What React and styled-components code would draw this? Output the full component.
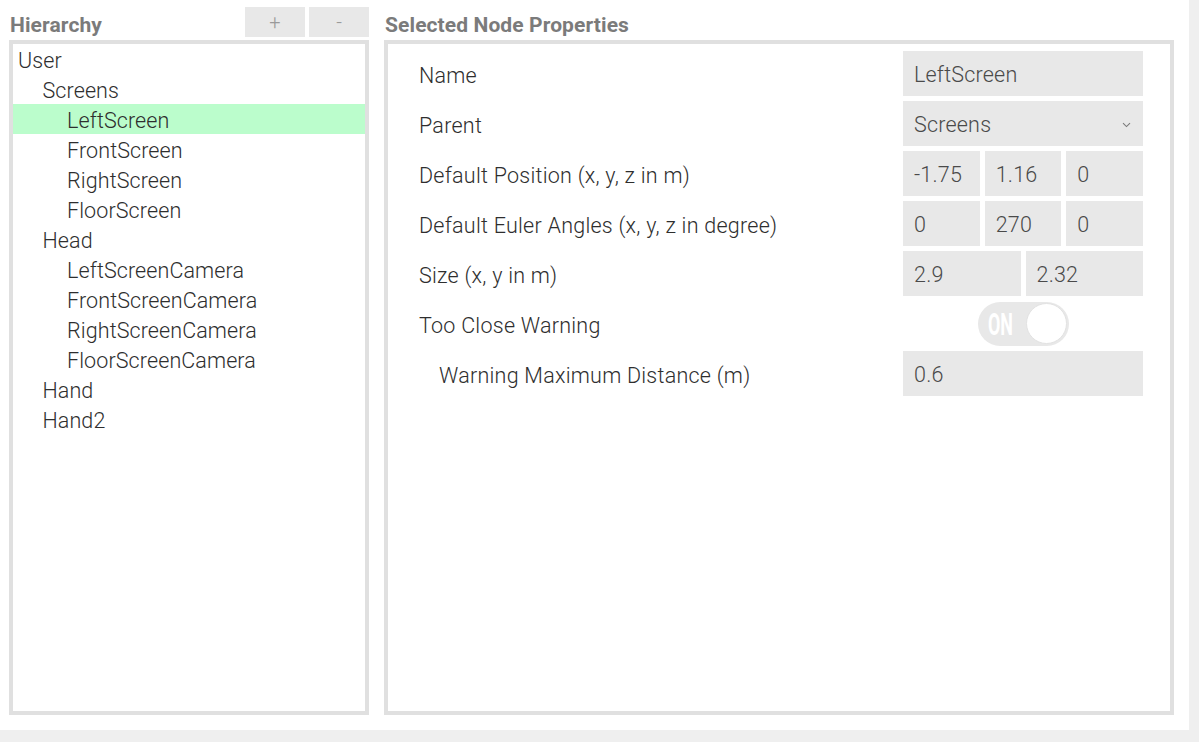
import React from "react";
import styled, { createGlobalStyle } from "styled-components";

const Global = createGlobalStyle`
  html, body { margin: 0; padding: 0; background: #efefef; }
  body { font-family: Roboto, "Liberation Sans", sans-serif; }
  * { box-sizing: border-box; }
`;

const Window = styled.div`
  width: 1189px;
  height: 730px;
  background: #ffffff;
  display: flex;
  gap: 15px;
  padding: 0 15px 15px 9px;
`;

const Column = styled.div`
  display: flex;
  flex-direction: column;
  width: ${(p) => p.$w}px;
`;

const HeaderBar = styled.div`
  height: 40px;
  display: flex;
  align-items: flex-start;
  justify-content: space-between;
`;

const Title = styled.div`
  font-family: Roboto, sans-serif;
  font-weight: 700;
  font-size: 21px;
  letter-spacing: 0.1px;
  color: #7b7b7b;
  padding: 13px 0 0 1px;
  line-height: 24px;
`;

const ButtonGroup = styled.div`
  display: flex;
  gap: 4px;
  padding-top: 7px;
`;

const SmallButton = styled.button`
  width: 60px;
  height: 30px;
  border: none;
  background: #e8e8e8;
  color: #9a9a9a;
  font-family: Roboto, sans-serif;
  font-weight: 300;
  font-size: 20px;
  padding: 0;
  display: flex;
  align-items: center;
  justify-content: center;
`;

const Panel = styled.div`
  flex: 1;
  border: 4px solid #e0e0e0;
  background: #fff;
`;

const TreeRow = styled.div`
  height: 30px;
  display: flex;
  align-items: center;
  padding-top: 2px;
  padding-left: ${(p) => 5 + p.$level * 24.5}px;
  background: ${(p) => (p.$selected ? "#bbfdcc" : "transparent")};
  font-size: 21.5px;
  font-weight: 300;
  letter-spacing: 0.1px;
  color: #2e2e2e;
`;

const PropList = styled.div`
  display: flex;
  flex-direction: column;
  gap: 5px;
  padding: 7px 27px 0 31px;
`;

const PropRow = styled.div`
  height: 45px;
  display: flex;
  align-items: center;
  justify-content: space-between;
`;

const Label = styled.div`
  font-size: 21.5px;
  font-weight: 300;
  letter-spacing: 0.25px;
  color: #2e2e2e;
  padding-top: 3px;
  padding-left: ${(p) => (p.$indent ? 20 : 0)}px;
`;

const Fields = styled.div`
  width: 240px;
  height: 45px;
  display: flex;
  gap: 5px;
  justify-content: ${(p) => (p.$center ? "center" : "flex-start")};
  align-items: center;
`;

const Field = styled.div`
  flex: 1;
  height: 45px;
  background: #e8e8e8;
  display: flex;
  align-items: center;
  justify-content: space-between;
  padding: 2px 12px 0 11px;
  font-size: 21.5px;
  font-weight: 300;
  letter-spacing: 0.2px;
  color: #4a4a4a;
`;

const Toggle = styled.div`
  width: 91px;
  height: 44px;
  border-radius: 22px;
  background: #e8e8e8;
  display: flex;
  align-items: center;
  justify-content: space-between;
  padding: 0 2px 0 10px;
`;

const ToggleText = styled.span`
  font-family: Roboto, sans-serif;
  font-weight: 700;
  font-size: 32px;
  color: #fff;
  display: inline-block;
  transform: scaleX(0.56);
  transform-origin: left center;
  width: 30px;
  line-height: 1;
`;

const Knob = styled.div`
  width: 41px;
  height: 41px;
  border-radius: 50%;
  background: #fff;
  border: 1px solid #e2e2e2;
`;

const Chevron = () => (
  <svg width="9" height="6" viewBox="0 0 9 6">
    <path d="M1 1.2 L4.5 4.6 L8 1.2" fill="none" stroke="#7a7a7a" strokeWidth="1.1" />
  </svg>
);

const tree = [
  ["User", 0],
  ["Screens", 1],
  ["LeftScreen", 2, true],
  ["FrontScreen", 2],
  ["RightScreen", 2],
  ["FloorScreen", 2],
  ["Head", 1],
  ["LeftScreenCamera", 2],
  ["FrontScreenCamera", 2],
  ["RightScreenCamera", 2],
  ["FloorScreenCamera", 2],
  ["Hand", 1],
  ["Hand2", 1],
];

export default function App() {
  return (
    <>
      <Global />
      <Window>
        <Column $w={360}>
          <HeaderBar>
            <Title>Hierarchy</Title>
            <ButtonGroup>
              <SmallButton>+</SmallButton>
              <SmallButton>-</SmallButton>
            </ButtonGroup>
          </HeaderBar>
          <Panel>
            {tree.map(([name, level, sel]) => (
              <TreeRow key={name} $level={level} $selected={sel}>
                {name}
              </TreeRow>
            ))}
          </Panel>
        </Column>
        <Column $w={790}>
          <HeaderBar>
            <Title>Selected Node Properties</Title>
          </HeaderBar>
          <Panel>
            <PropList>
              <PropRow>
                <Label>Name</Label>
                <Fields>
                  <Field>LeftScreen</Field>
                </Fields>
              </PropRow>
              <PropRow>
                <Label>Parent</Label>
                <Fields>
                  <Field>
                    Screens
                    <Chevron />
                  </Field>
                </Fields>
              </PropRow>
              <PropRow>
                <Label>Default Position (x, y, z in m)</Label>
                <Fields>
                  <Field>-1.75</Field>
                  <Field>1.16</Field>
                  <Field>0</Field>
                </Fields>
              </PropRow>
              <PropRow>
                <Label>Default Euler Angles (x, y, z in degree)</Label>
                <Fields>
                  <Field>0</Field>
                  <Field>270</Field>
                  <Field>0</Field>
                </Fields>
              </PropRow>
              <PropRow>
                <Label>Size (x, y in m)</Label>
                <Fields>
                  <Field>2.9</Field>
                  <Field>2.32</Field>
                </Fields>
              </PropRow>
              <PropRow>
                <Label>Too Close Warning</Label>
                <Fields $center>
                  <Toggle>
                    <ToggleText>ON</ToggleText>
                    <Knob />
                  </Toggle>
                </Fields>
              </PropRow>
              <PropRow>
                <Label $indent>Warning Maximum Distance (m)</Label>
                <Fields>
                  <Field>0.6</Field>
                </Fields>
              </PropRow>
            </PropList>
          </Panel>
        </Column>
      </Window>
    </>
  );
}
